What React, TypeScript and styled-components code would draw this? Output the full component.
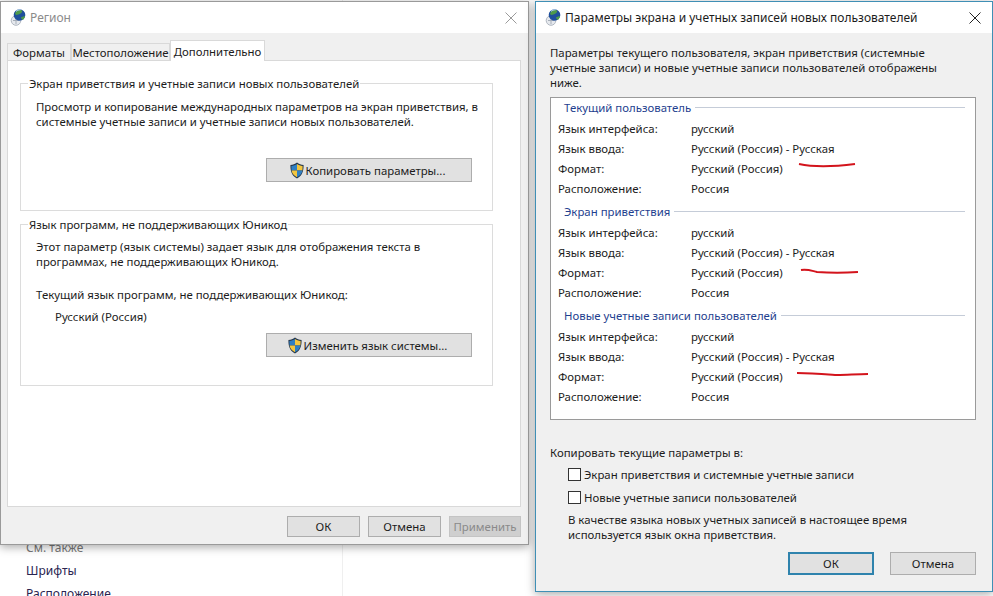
import styled, { createGlobalStyle } from "styled-components";

const GlobalStyle = createGlobalStyle`
  html, body { margin: 0; padding: 0; background: #fff; overflow: hidden; }
  body { font-family: "Noto Sans", "Open Sans", sans-serif; font-size: 11.4px; color: #1c1c1c; }
`;

const Desktop = styled.div`
  position: relative;
  width: 993px;
  height: 596px;
  overflow: hidden;
  background: #fff;
`;

const BackLinks = styled.div`
  display: flex;
  flex-direction: column;
  gap: 8px;
  padding: 540px 0 0 26px;
  height: 596px;
  width: 343px;
  box-sizing: border-box;
  border-right: 1px solid #efefef;
  font-size: 12px;
  line-height: 15px;
  color: #2a2450;
`;

const BackHeading = styled.div`
  color: #777;
`;

const Window = styled.div<{ $left: number; $top: number; $width: number; $height: number; $accent?: boolean }>`
  position: absolute;
  left: ${(p) => p.$left}px;
  top: ${(p) => p.$top}px;
  width: ${(p) => p.$width}px;
  height: ${(p) => p.$height}px;
  box-sizing: border-box;
  display: flex;
  flex-direction: column;
  background: #f0f0f0;
  border: 1px solid ${(p) => (p.$accent ? "#3f8fb5" : "#9a9a9a")};
  box-shadow: 0 2px 9px rgba(0, 0, 0, 0.35);
`;

const TitleBar = styled.div`
  flex: none;
  height: 31px;
  display: flex;
  align-items: center;
  gap: 3px;
  padding: 0 9px;
  background: #fff;
`;

const TitleText = styled.div<{ $muted?: boolean }>`
  flex: 1;
  font-size: 12px;
  color: ${(p) => (p.$muted ? "#8b8b8b" : "#1c1c1c")};
`;

const CloseMark = styled.svg`
  flex: none;
  width: 12px;
  height: 12px;
  margin-right: 2px;
`;

const LeftBody = styled.div`
  flex: 1;
  display: flex;
  flex-direction: column;
  padding: 7px 7px 0 6px;
`;

const Tabs = styled.div`
  display: flex;
  align-items: flex-end;
  height: 21px;
  margin-bottom: -1px;
  position: relative;
  z-index: 1;
`;

const Tab = styled.div<{ $active?: boolean; $width: number }>`
  box-sizing: border-box;
  width: ${(p) => p.$width}px;
  height: ${(p) => (p.$active ? 21 : 18)}px;
  display: flex;
  align-items: center;
  justify-content: center;
  background: ${(p) => (p.$active ? "#fff" : "#f0f0f0")};
  border: 1px solid #d9d9d9;
  border-bottom: ${(p) => (p.$active ? "none" : "1px solid #d9d9d9")};
`;

const TabPanel = styled.div`
  height: 447px;
  box-sizing: border-box;
  background: #fff;
  border: 1px solid #d9d9d9;
  padding: 15px 27px 0 12px;
  display: flex;
  flex-direction: column;
  gap: 6px;
`;

const Group = styled.fieldset<{ $height: number; $top: number }>`
  margin: 0;
  height: ${(p) => p.$height}px;
  box-sizing: border-box;
  border: 1px solid #dcdcdc;
  padding: ${(p) => p.$top}px 15px 0 15px;
  min-width: 0;
`;

const Legend = styled.legend`
  margin-left: -8px;
  padding: 0 1px;
  line-height: 15px;
`;

const Para = styled.p<{ $top?: number; $indent?: number }>`
  margin: ${(p) => p.$top ?? 0}px 0 0 ${(p) => p.$indent ?? 0}px;
  line-height: 15px;
  white-space: nowrap;
`;

const GroupAction = styled.div<{ $top: number }>`
  display: flex;
  justify-content: flex-end;
  margin: ${(p) => p.$top}px 5px 0 0;
`;

const ShieldButton = styled.div`
  box-sizing: border-box;
  width: 206px;
  height: 24px;
  display: flex;
  align-items: center;
  justify-content: center;
  gap: 1px;
  background: #e1e1e1;
  border: 1px solid #adadad;
  padding-right: 4px;
`;

const Footer = styled.div`
  display: flex;
  justify-content: flex-end;
  gap: 8px;
  padding: 9px 0 0 0;
`;

const Button = styled.div<{ $width: number; $height: number; $disabled?: boolean; $primary?: boolean }>`
  box-sizing: border-box;
  width: ${(p) => p.$width}px;
  height: ${(p) => p.$height}px;
  display: flex;
  align-items: center;
  justify-content: center;
  background: ${(p) => (p.$disabled ? "#cfcfcf" : "#e1e1e1")};
  border: ${(p) => (p.$primary ? "2px solid #2f83ad" : `1px solid ${p.$disabled ? "#c4c4c4" : "#adadad"}`)};
  color: ${(p) => (p.$disabled ? "#8a8a8a" : "#1c1c1c")};
`;

const RightBody = styled.div`
  flex: 1;
  display: flex;
  flex-direction: column;
  padding: 12px 16px 0 14px;
`;

const SummaryBox = styled.div`
  position: relative;
  margin-top: 7px;
  height: 323px;
  box-sizing: border-box;
  background: #fff;
  border: 1px solid #9a9a9a;
  padding: 2px 10px 0 7px;
`;

const Section = styled.section`
  height: 104px;
`;

const SectionHead = styled.div`
  display: flex;
  align-items: center;
  gap: 4px;
  height: 15px;
  padding-left: 6px;
  margin-bottom: 4px;
  color: #1f3f8f;
`;

const HeadRule = styled.div`
  flex: 1;
  height: 1px;
  background: #c5ccd8;
`;

const InfoRow = styled.div`
  display: grid;
  grid-template-columns: 133px 1fr;
  height: 20px;
  line-height: 20px;
`;

const RedStroke = styled.svg<{ $left: number; $top: number; $width: number }>`
  position: absolute;
  left: ${(p) => p.$left}px;
  top: ${(p) => p.$top}px;
  width: ${(p) => p.$width}px;
  height: 8px;
`;

const CopyHeading = styled.div`
  margin-top: 25px;
  line-height: 15px;
`;

const CheckRow = styled.label<{ $top: number }>`
  display: flex;
  align-items: center;
  gap: 3px;
  margin: ${(p) => p.$top}px 0 0 18px;
  height: 15px;
`;

const CheckBox = styled.span`
  box-sizing: border-box;
  width: 13px;
  height: 13px;
  background: #fff;
  border: 1px solid #333;
`;

const DialogActions = styled.div`
  display: flex;
  justify-content: flex-end;
  gap: 16px;
  margin-top: 10px;
`;

const rows = [
  ["Язык интерфейса:", "русский"],
  ["Язык ввода:", "Русский (Россия) - Русская"],
  ["Формат:", "Русский (Россия)"],
  ["Расположение:", "Россия"],
];

const sections = ["Текущий пользователь", "Экран приветствия", "Новые учетные записи пользователей"];

const Globe = () => (
  <svg width="17" height="17" viewBox="0 0 17 17">
    <circle cx="6" cy="11.500" r="4.800" fill="#e6e9ee" stroke="#b0b7c0" />
    <path d="M3 11.500h6M6 8v7" stroke="#a6aeb8" fill="none" />
    <circle cx="9.500" cy="6" r="5.800" fill="#1f4f9c" />
    <path d="M5.500 3.500C7 1 10 .5 12 1.500c.5 1.500-.5 2.500-2 3.300S6.500 6.500 5.500 5.500c-.5-.6-.4-1.300 0-2zM11 8.300c1.200-.3 2.800-1.300 4-1.300-.2 1.800-1 3-2.200 4-1-.8-1.800-1.700-1.800-2.700z" fill="#4f9a4a" />
    <path d="M6 2.500C7 1.300 8.500.8 10.500.8" stroke="#bfe0f5" fill="none" />
  </svg>
);

const Shield = () => (
  <svg width="16" height="17" viewBox="0 0 16 17">
    <path d="M8 .6c2 1.500 4 2.200 6.600 2.400 0 6-1 10.500-6.600 13.400C2.400 13.500 1.400 9 1.400 3 4 2.800 6 2.100 8 .6z" fill="#27384d" />
    <path d="M8 2v6.500H2.600C2.400 7 2.400 5.500 2.400 3.900 4.500 3.700 6.400 3 8 2z" fill="#2f7fc4" />
    <path d="M8 2c1.600 1 3.500 1.700 5.600 1.900 0 1.600 0 3.100-.2 4.600H8z" fill="#f3c63f" />
    <path d="M8 8.500h5.400C12.900 11.200 11.500 13.500 8 15.200z" fill="#2f7fc4" />
    <path d="M8 8.500v6.700C4.500 13.500 3.100 11.200 2.600 8.500z" fill="#f3c63f" />
  </svg>
);

const Cross = ({ color }: { color: string }) => (
  <CloseMark viewBox="0 0 12 12">
    <path d="M.5.500l11 11M11.500.500l-11 11" stroke={color} strokeWidth="1" fill="none" />
  </CloseMark>
);

function App() {
  return (
    <Desktop>
      <GlobalStyle />
      <BackLinks>
        <BackHeading>См. также</BackHeading>
        <div>Шрифты</div>
        <div>Расположение</div>
      </BackLinks>

      <Window $left={0} $top={1} $width={529} $height={544}>
        <TitleBar>
          <Globe />
          <TitleText $muted>Регион</TitleText>
          <Cross color="#9a9a9a" />
        </TitleBar>
        <LeftBody>
          <Tabs>
            <Tab $width={64}>Форматы</Tab>
            <Tab $width={99}>Местоположение</Tab>
            <Tab $width={95} $active>Дополнительно</Tab>
          </Tabs>
          <TabPanel>
            <Group $height={135} $top={8}>
              <Legend>Экран приветствия и учетные записи новых пользователей</Legend>
              <Para>Просмотр и копирование международных параметров на экран приветствия, в</Para>
              <Para>системные учетные записи и учетные записи новых пользователей.</Para>
              <GroupAction $top={29}>
                <ShieldButton>
                  <Shield />
                  Копировать параметры...
                </ShieldButton>
              </GroupAction>
            </Group>
            <Group $height={169} $top={7}>
              <Legend>Язык программ, не поддерживающих Юникод</Legend>
              <Para>Этот параметр (язык системы) задает язык для отображения текста в</Para>
              <Para>программах, не поддерживающих Юникод.</Para>
              <Para $top={18}>Текущий язык программ, не поддерживающих Юникод:</Para>
              <Para $top={7} $indent={19}>Русский (Россия)</Para>
              <GroupAction $top={9}>
                <ShieldButton>
                  <Shield />
                  Изменить язык системы...
                </ShieldButton>
              </GroupAction>
            </Group>
          </TabPanel>
          <Footer>
            <Button $width={73} $height={21}>ОК</Button>
            <Button $width={73} $height={21}>Отмена</Button>
            <Button $width={72} $height={21} $disabled>Применить</Button>
          </Footer>
        </LeftBody>
      </Window>

      <Window $left={535} $top={1} $width={458} $height={591} $accent>
        <TitleBar>
          <Globe />
          <TitleText>Параметры экрана и учетных записей новых пользователей</TitleText>
          <Cross color="#222" />
        </TitleBar>
        <RightBody>
          <Para>Параметры текущего пользователя, экран приветствия (системные</Para>
          <Para>учетные записи) и новые учетные записи пользователей отображены</Para>
          <Para>ниже.</Para>
          <SummaryBox>
            {sections.map((title) => (
              <Section key={title}>
                <SectionHead>
                  {title}
                  <HeadRule />
                </SectionHead>
                {rows.map(([label, value]) => (
                  <InfoRow key={label}>
                    <span>{label}</span>
                    <span>{value}</span>
                  </InfoRow>
                ))}
              </Section>
            ))}
            <RedStroke $left={247} $top={64} $width={60} viewBox="0 0 60 8">
              <path d="M1 2c14 3 32 3 56 0" stroke="#d3141c" strokeWidth="2" fill="none" />
            </RedStroke>
            <RedStroke $left={249} $top={170} $width={60} viewBox="0 0 60 8">
              <path d="M1 2c6-1 8 0 16 2 12 1 28 1 41 0" stroke="#d3141c" strokeWidth="2" fill="none" />
            </RedStroke>
            <RedStroke $left={245} $top={273} $width={73} viewBox="0 0 73 8">
              <path d="M1 2c14 0 26 1 40 2 10 0 20-1 31-1" stroke="#d3141c" strokeWidth="2" fill="none" />
            </RedStroke>
          </SummaryBox>
          <CopyHeading>Копировать текущие параметры в:</CopyHeading>
          <CheckRow $top={7}>
            <CheckBox />
            Экран приветствия и системные учетные записи
          </CheckRow>
          <CheckRow $top={8}>
            <CheckBox />
            Новые учетные записи пользователей
          </CheckRow>
          <Para $top={7} $indent={18}>В качестве языка новых учетных записей в настоящее время</Para>
          <Para $indent={18}>используется язык окна приветствия.</Para>
          <DialogActions>
            <Button $width={86} $height={23} $primary>ОК</Button>
            <Button $width={86} $height={23}>Отмена</Button>
          </DialogActions>
        </RightBody>
      </Window>
    </Desktop>
  );
}

export default App;
